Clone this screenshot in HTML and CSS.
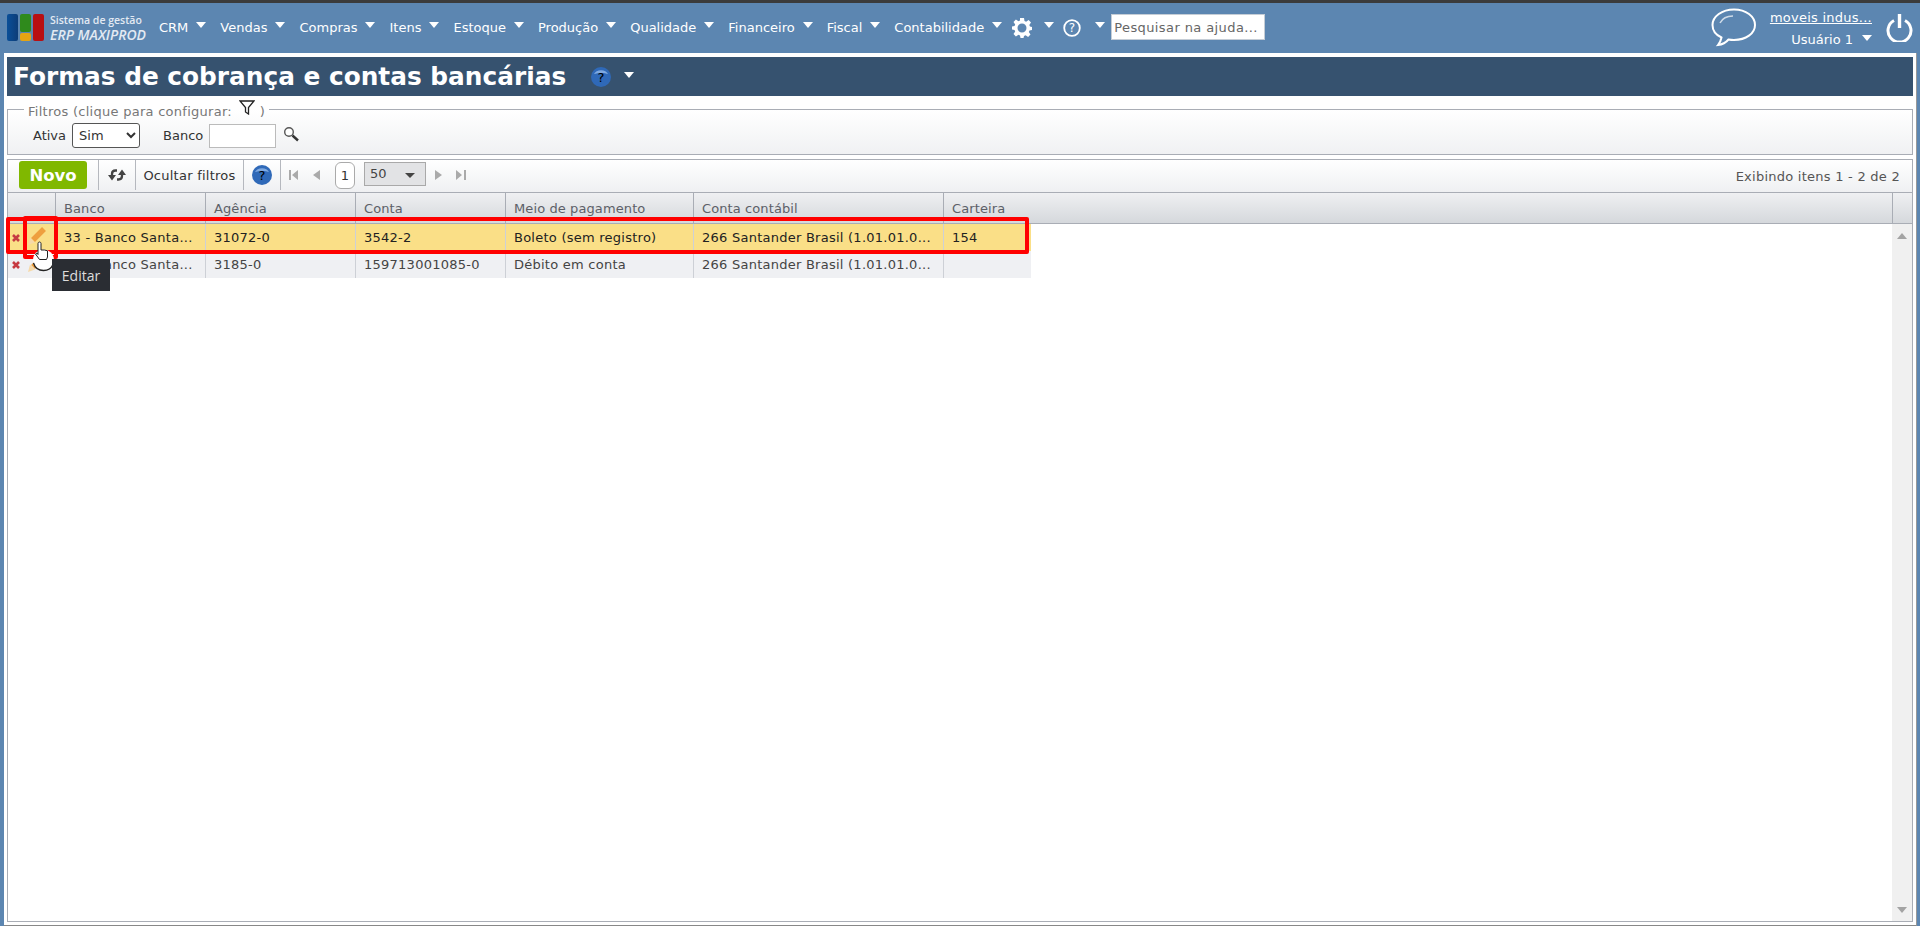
FILE: index.html
```html
<!DOCTYPE html>
<html lang="pt-BR">
<head>
<meta charset="UTF-8" />
<title>Formas de cobrança e contas bancárias</title>
<link rel="stylesheet" href="styles.css">
</head>
<body>
  <header class="topbar">
    <div class="logo">
      <div class="logo-blocks">
        <span class="blk blk-blue"></span>
        <span class="blk-mid"><span class="blk blk-green"></span><span class="blk blk-yellow"></span></span>
        <span class="blk blk-red"></span>
      </div>
      <div class="logo-text">
        <span class="logo-top">Sistema de gestão</span>
        <span class="logo-name">ERP MAXIPROD</span>
      </div>
    </div>
    <nav class="menu">
      <a class="menu-item">CRM<i class="arrow"></i></a>
      <a class="menu-item">Vendas<i class="arrow"></i></a>
      <a class="menu-item">Compras<i class="arrow"></i></a>
      <a class="menu-item">Itens<i class="arrow"></i></a>
      <a class="menu-item">Estoque<i class="arrow"></i></a>
      <a class="menu-item">Produção<i class="arrow"></i></a>
      <a class="menu-item">Qualidade<i class="arrow"></i></a>
      <a class="menu-item">Financeiro<i class="arrow"></i></a>
      <a class="menu-item">Fiscal<i class="arrow"></i></a>
      <a class="menu-item menu-last">Contabilidade<i class="arrow"></i></a>
      <svg class="gear" width="20" height="20" viewBox="0 0 20 20">
        <path fill="#fff" fill-rule="evenodd" d="M8 0h4l.5 3 1.600.7L16.600 2 19 4.400 17.300 6.900l.7 1.600 2 .5v3l-2.500.5-.7 1.600 1.700 2.500L16.100 19l-2.500-1.700-1.600.7-.5 2H8.500L8 17.500l-1.600-.7L3.900 18.500 1.500 16.100l1.700-2.500-.7-1.600L0 11.500v-3l2.500-.5.7-1.600L1.500 3.900 3.900 1.500 6.400 3.200 8 2.500zM10 5.500a4.500 4.500 0 1 0 0 9 4.500 4.500 0 0 0 0-9z"/>
      </svg>
      <i class="arrow arrow-gear"></i>
      <svg class="help-line" width="18" height="18" viewBox="0 0 18 18">
        <circle cx="9" cy="9" r="7.800" fill="none" stroke="#fff" stroke-width="1.800"/>
        <text x="9" y="13" text-anchor="middle" class="help-q">?</text>
      </svg>
      <i class="arrow arrow-help"></i>
      <input class="help-search" type="text" placeholder="Pesquisar na ajuda...">
    </nav>
    <div class="user-area">
      <svg class="bubble" width="46" height="40" viewBox="0 0 46 40">
        <path fill="none" stroke="#fff" stroke-width="2" d="M23 1.500C11 1.500 1.500 8.500 1.500 17c0 5.500 3.500 10 9 12.500-.5 3-2 5.500-3.500 7.500 4-.5 8-2.500 10.500-5.500 2 .4 3.500.5 5.500.5 12 0 21-6.500 21-15C44 8.500 35 1.500 23 1.500z"/>
        <path fill="none" stroke="#fff" stroke-width="1.500" opacity=".7" d="M9 15c2-4 7-7 13-7"/>
      </svg>
      <div class="user-info">
        <a class="company">moveis indus...</a>
        <span class="user-name">Usuário 1<i class="arrow arrow-user"></i></span>
      </div>
      <svg class="power" width="27" height="28" viewBox="0 0 27 28">
        <path fill="none" stroke="#fff" stroke-width="3" d="M8 6.500a11.500 11.500 0 1 0 11 0"/>
        <path fill="none" stroke="#fff" stroke-width="3.400" d="M13.500 0v14"/>
      </svg>
    </div>
  </header>

  <main class="page">
    <div class="page-title">
      <h1>Formas de cobrança e contas bancárias</h1>
      <svg class="help-ball title-help" width="20" height="20" viewBox="0 0 20 20">
        <circle cx="10" cy="10" r="10" fill="#2f69b8"/>
        <path d="M3 7a7.500 6 0 0 1 14 0c-3-1.500-10-1.500-14 0z" fill="#7fa9e0"/>
        <text x="10" y="15" text-anchor="middle" class="help-ball-q">?</text>
      </svg>
      <i class="arrow arrow-title"></i>
    </div>

    <fieldset class="filters">
      <legend>Filtros (clique para configurar:
        <svg class="funnel" width="16" height="15" viewBox="0 0 16 15"><path fill="none" stroke="#222" stroke-width="1.300" d="M1 1h14L9.500 7.500V14L6.500 12V7.500z"/></svg>
        )</legend>
      <label class="filter-label">Ativa</label>
      <select class="filter-select"><option>Sim</option></select>
      <label class="filter-label filter-banco">Banco</label>
      <input class="filter-input" type="text">
      <svg class="lens" width="16" height="16" viewBox="0 0 16 16">
        <circle cx="6" cy="6" r="4.300" fill="#fff" stroke="#555" stroke-width="1.400"/>
        <path d="M9.500 9.500L15 14.500" stroke="#333" stroke-width="2.400"/>
      </svg>
    </fieldset>

    <section class="list">
      <div class="toolbar">
        <button class="btn-new">Novo</button>
        <span class="tool tool-sync">
          <svg width="18" height="14" viewBox="0 0 18 14">
            <path fill="none" stroke="#444" stroke-width="2.300" d="M9 2.500H7.500C5 2.500 4 4 4 6v2M9 11.500h1.500C13 11.500 14 10 14 8V6"/>
            <path fill="#444" d="M0 7h8l-4 5.500zM10 7h8l-4-5.500z"/>
          </svg>
        </span>
        <span class="tool tool-text">Ocultar filtros</span>
        <span class="tool tool-help">
          <svg class="help-ball" width="20" height="20" viewBox="0 0 20 20">
            <circle cx="10" cy="10" r="10" fill="#2f69b8"/>
            <path d="M3 7a7.500 6 0 0 1 14 0c-3-1.500-10-1.500-14 0z" fill="#7fa9e0"/>
            <text x="10" y="15" text-anchor="middle" class="help-ball-q">?</text>
          </svg>
        </span>
        <div class="pager">
          <svg class="pg-first" width="10" height="10" viewBox="0 0 10 10"><path fill="#aaa" d="M0 0h2v10H0zM9 0v10L3 5z"/></svg>
          <svg class="pg-prev" width="7" height="10" viewBox="0 0 7 10"><path fill="#aaa" d="M7 0v10L0 5z"/></svg>
          <span class="pg-num">1</span>
          <span class="pg-size">50<i class="pg-caret"></i></span>
          <svg class="pg-next" width="7" height="10" viewBox="0 0 7 10"><path fill="#aaa" d="M0 0v10l7-5z"/></svg>
          <svg class="pg-last" width="10" height="10" viewBox="0 0 10 10"><path fill="#aaa" d="M0 0v10l6-5zM8 0h2v10H8z"/></svg>
        </div>
        <span class="counter">Exibindo itens 1 - 2 de 2</span>
      </div>

      <div class="grid-head">
        <div class="cell c-act"></div>
        <div class="cell c-banco">Banco</div>
        <div class="cell c-ag">Agência</div>
        <div class="cell c-conta">Conta</div>
        <div class="cell c-meio">Meio de pagamento</div>
        <div class="cell c-contabil">Conta contábil</div>
        <div class="cell c-cart">Carteira</div>
        <div class="cell c-fill"></div>
        <div class="cell c-scroll"></div>
      </div>

      <div class="grid-body">
        <div class="rows">
          <div class="row row-on">
            <div class="cell c-act">
              <svg class="ico-x" width="8" height="8" viewBox="0 0 8 8"><path stroke="#c63a42" stroke-width="2.600" d="M1 1l6 6M7 1L1 7"/></svg>
              <svg class="ico-pen" width="18" height="18" viewBox="0 0 18 18"><path stroke="#ee9f3e" stroke-width="5.500" d="M5 13L16 2"/><path fill="#f6d9a8" d="M2 10.500L7 15.500 0 18z"/></svg>
            </div>
            <div class="cell c-banco">33 - Banco Santa...</div>
            <div class="cell c-ag">31072-0</div>
            <div class="cell c-conta">3542-2</div>
            <div class="cell c-meio">Boleto (sem registro)</div>
            <div class="cell c-contabil">266 Santander Brasil (1.01.01.0...</div>
            <div class="cell c-cart">154</div>
          </div>
          <div class="row">
            <div class="cell c-act">
              <svg class="ico-x" width="8" height="8" viewBox="0 0 8 8"><path stroke="#c63a42" stroke-width="2.600" d="M1 1l6 6M7 1L1 7"/></svg>
              <svg class="ico-pen" width="18" height="18" viewBox="0 0 18 18"><path stroke="#ee9f3e" stroke-width="5.500" d="M5 13L16 2"/><path fill="#f6d9a8" d="M2 10.500L7 15.500 0 18z"/></svg>
            </div>
            <div class="cell c-banco">33 - Banco Santa...</div>
            <div class="cell c-ag">3185-0</div>
            <div class="cell c-conta">159713001085-0</div>
            <div class="cell c-meio">Débito em conta</div>
            <div class="cell c-contabil">266 Santander Brasil (1.01.01.0...</div>
            <div class="cell c-cart"></div>
          </div>
        </div>
        <div class="scrollbar">
          <i class="sb-up"></i>
          <i class="sb-down"></i>
        </div>
      </div>
    </section>
  </main>

  <!-- marcacoes do print -->
  <div class="mark mark-row"></div>
  <div class="mark mark-pen"></div>
  <svg class="pointer" width="30" height="34" viewBox="0 0 30 34">
    <circle cx="11.500" cy="19" r="10.500" fill="#fff"/>
    <path fill="none" stroke="#222" stroke-width="1.300" d="M1.500 22c1.500 5 5.500 7.500 10 7.500s8-2.500 9.500-6"/>
    <path fill="#fff" stroke="#222" d="M6 2.500c0-2 3-2 3 0V9h3.500l3 .8V16l-1 2.500H7.500L3.500 13l1.500-1 1 1.500z"/>
  </svg>
  <div class="tip">Editar</div>
</body>
</html>
```

FILE: styles.css
```css
* {
  box-sizing: border-box;
}

html, body {
  height: 926px;
}

body {
  margin: 0;
  position: relative;
  display: flex;
  flex-direction: column;
  overflow: hidden;
  background: #5c86b1;
  border-top: 3px solid #3b3b3b;
  font-family: "DejaVu Sans", Verdana, sans-serif;
  font-size: 13px;
  color: #333;
}

/* Top bar */
.topbar {
  height: 50px;
  flex: none;
  display: flex;
  align-items: center;
  color: #fff;
}

.logo {
  width: 159px;
  padding-left: 7px;
  display: flex;
  gap: 6px;
}

.logo-blocks {
  display: flex;
  gap: 2px;
  height: 27px;
}

.blk {
  display: block;
  border-radius: 2px;
}

.blk-blue {
  width: 11px;
  background: linear-gradient(90deg, #0a4f98, #0d3d78);
}

.blk-mid {
  display: flex;
  flex-direction: column;
  gap: 1px;
  width: 11px;
}

.blk-green {
  flex: 1;
  background: #2f8a1c;
}

.blk-yellow {
  height: 8px;
  background: #e5a413;
}

.blk-red {
  width: 11px;
  background: #b80f12;
}

.logo-text {
  display: flex;
  flex-direction: column;
  color: #e3eaf3;
  white-space: nowrap;
  font-family: "Open Sans", sans-serif;
}

.logo-top {
  font-size: 10.500px;
  font-weight: 600;
  line-height: 13px;
}

.logo-name {
  font-size: 14px;
  font-weight: 600;
  font-style: italic;
  line-height: 15px;
}

.menu {
  display: flex;
  align-items: center;
  margin-top: -2px;
}

.menu-item {
  display: flex;
  align-items: center;
  margin-right: 14px;
  white-space: nowrap;
  color: #fff;
}

.menu-last {
  margin-right: 0;
}

.arrow {
  display: block;
  width: 0;
  height: 0;
  border-left: 5px solid transparent;
  border-right: 5px solid transparent;
  border-top: 6px solid #fff;
}

.menu-item .arrow {
  margin: -4px 0 0 8px;
}

.gear {
  margin: 2px 0 0 10px;
}

.arrow-gear {
  margin: -5px 0 0 12px;
}

.help-line {
  margin: 2px 0 0 9px;
}

.help-q {
  font-size: 12px;
  fill: #fff;
}

.arrow-help {
  margin: -5px 0 0 14px;
}

.help-search {
  width: 154px;
  height: 26px;
  margin-left: 6px;
  padding: 0 2px;
  border: 1px solid #c5cdd6;
  background: #fff;
  font: 13px "DejaVu Sans", sans-serif;
  letter-spacing: .4px;
}

.help-search::placeholder {
  color: #666;
  opacity: 1;
}

.user-area {
  margin-left: auto;
  display: flex;
  align-items: center;
}

.bubble {
  margin-right: 12px;
}

.user-info {
  width: 103px;
  display: flex;
  flex-direction: column;
  align-items: flex-end;
  gap: 7px;
}

.company {
  color: #fff;
  text-decoration: underline;
  white-space: nowrap;
  letter-spacing: .25px;
}

.user-name {
  display: flex;
  align-items: center;
  white-space: nowrap;
}

.arrow-user {
  margin: -2px 0 0 9px;
}

.power {
  margin: 0 7px 0 14px;
}

/* Page */
.page {
  flex: 1;
  min-height: 0;
  display: flex;
  flex-direction: column;
  margin: 0 3px 0 4px;
  padding: 4px 3px 3px;
  background: #fff;
  border-right: 1px solid #999;
  border-bottom: 1px solid #888;
}

.page-title {
  height: 39px;
  flex: none;
  display: flex;
  align-items: center;
  padding-left: 6px;
  background: #36526f;
  color: #fff;
}

h1 {
  margin: 0;
  font-size: 24.800px;
  font-weight: 700;
}

.title-help {
  margin-left: 25px;
}

.arrow-title {
  margin: -4px 0 0 13px;
}

.filters {
  flex: none;
  height: 55px;
  margin: 4px 0 0;
  padding: 4px 0 0 25px;
  display: flex;
  align-items: center;
  border: 1px solid #a9adb5;
  background: linear-gradient(#fff, #f0f1f3);
}

.filters legend {
  margin-left: -9px;
  padding: 0 4px;
  color: #777;
  font-size: 13px;
  line-height: 15px;
  letter-spacing: .27px;
}

.funnel {
  vertical-align: 1px;
  margin-left: 3px;
}

.filter-label {
  color: #333;
}

.filter-select {
  width: 68px;
  height: 25px;
  margin-left: 6px;
  padding-left: 2px;
  border: 1px solid #555;
  border-radius: 3px;
  background: #fff;
  font: 13px "DejaVu Sans", sans-serif;
  color: #333;
}

.filter-banco {
  margin-left: 23px;
}

.filter-input {
  width: 67px;
  height: 24px;
  margin-left: 6px;
  border: 1px solid #bbb;
  background: #fff;
}

.lens {
  margin: -3px 0 0 7px;
}

/* List */
.list {
  flex: 1;
  min-height: 0;
  display: flex;
  flex-direction: column;
  margin-top: 4px;
  border: 1px solid #a9adb5;
}

.toolbar {
  height: 32px;
  flex: none;
  display: flex;
  align-items: stretch;
  padding-left: 11px;
  background: linear-gradient(#fff, #eff0f2);
}

.btn-new {
  width: 68px;
  height: 28px;
  margin-top: 1px;
  border: none;
  border-radius: 3px;
  background: #80b800;
  color: #fff;
  font: 700 16.500px "DejaVu Sans", sans-serif;
}

.tool {
  display: flex;
  align-items: center;
  justify-content: center;
  height: 30px;
  border-left: 1px solid #b5b8be;
}

.tool-sync {
  width: 37px;
  margin-left: 11px;
}

.tool-text {
  width: 108px;
  color: #333;
  letter-spacing: .25px;
}

.tool-help {
  width: 37px;
}

.pager {
  display: flex;
  align-items: center;
  height: 30px;
  padding-left: 8px;
  border-left: 1px solid #b5b8be;
}

.pg-prev {
  margin-left: 14px;
}

.pg-num {
  width: 20px;
  height: 27px;
  margin-left: 15px;
  display: flex;
  align-items: center;
  justify-content: center;
  border: 1px solid #aaa;
  border-radius: 6px;
  background: #fff;
}

.pg-size {
  width: 62px;
  height: 24px;
  margin: -3px 0 0 9px;
  padding-left: 5px;
  display: flex;
  align-items: center;
  justify-content: space-between;
  border: 1px solid #a9a9a9;
  background: #e2e3e5;
  color: #444;
}

.pg-caret {
  width: 0;
  height: 0;
  margin: 3px 10px 0 0;
  border-left: 5px solid transparent;
  border-right: 5px solid transparent;
  border-top: 5px solid #444;
}

.pg-next {
  margin-left: 9px;
}

.pg-last {
  margin-left: 14px;
}

.counter {
  margin-left: auto;
  padding-right: 12px;
  align-self: center;
  color: #555;
  letter-spacing: .25px;
}

.grid-head {
  height: 32px;
  flex: none;
  display: flex;
  background: linear-gradient(#eff0f2, #d5d8dc);
  border-top: 1px solid #a9adb5;
  border-bottom: 1px solid #a9adb5;
  color: #5c6068;
  letter-spacing: .1px;
}

.cell {
  display: flex;
  align-items: center;
  padding-left: 8px;
  border-right: 1px solid #a9adb5;
  white-space: nowrap;
}

.c-act { width: 48px; padding-left: 0; }
.c-banco { width: 150px; }
.c-ag { width: 150px; }
.c-conta { width: 150px; }
.c-meio { width: 188px; }
.c-contabil { width: 250px; }
.c-cart { width: 87px; }
.c-fill { flex: 1; border-right: 1px solid #a9adb5; }
.c-scroll { width: 19px; border-right: none; }

.grid-head .c-cart {
  border-right: none;
}

.grid-body {
  flex: 1;
  min-height: 0;
  display: flex;
}

.rows {
  flex: 1;
}

.row {
  display: flex;
  height: 27px;
  width: 1023px;
  background: #eff0f3;
  color: #444;
  letter-spacing: .25px;
}

.row .cell {
  border-right: 1px solid #cdd0d6;
}

.row .c-cart {
  border-right: none;
}

.row-on {
  background: #fadf87;
  color: #222;
}

.ico-x {
  margin-left: 4px;
}

.ico-pen {
  margin: -3px 0 0 8px;
}

.scrollbar {
  width: 20px;
  flex: none;
  display: flex;
  flex-direction: column;
  justify-content: space-between;
  padding: 9px 5px 8px;
  background: #f0f0f0;
}

.sb-up, .sb-down {
  display: block;
  width: 0;
  height: 0;
  border-left: 5px solid transparent;
  border-right: 5px solid transparent;
}

.sb-up {
  border-bottom: 6px solid #a3a3a3;
}

.sb-down {
  border-top: 6px solid #a3a3a3;
}

/* Over the list */
.mark {
  position: absolute;
  border: 4px solid #f00;
  border-radius: 2px;
}

.mark-row {
  left: 6px;
  top: 214px;
  width: 1023px;
  height: 37px;
}

.mark-pen {
  left: 23px;
  top: 213px;
  width: 35px;
  height: 43px;
}

.pointer {
  position: absolute;
  left: 32px;
  top: 238px;
}

.tip {
  position: absolute;
  left: 52px;
  top: 256px;
  width: 58px;
  height: 32px;
  display: flex;
  align-items: center;
  justify-content: center;
  background: #2a2d33;
  color: #ddd;
  font-family: "Open Sans", sans-serif;
  font-size: 14px;
}
```
